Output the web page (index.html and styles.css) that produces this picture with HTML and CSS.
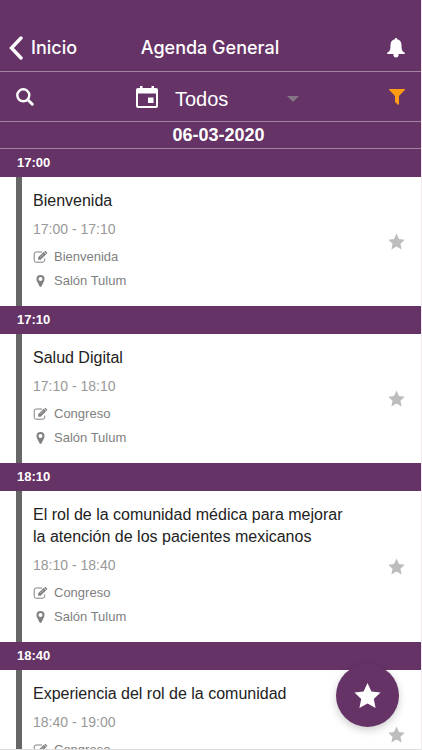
FILE: index.html
```html
<!DOCTYPE html>
<html lang="es">
<head>
    <meta charset="UTF-8">
    <meta name="viewport" content="width=device-width, initial-scale=1.0">
    <title>Agenda General</title>
    <link rel="stylesheet" href="styles.css">
</head>
<body>
    <!-- shared icons -->
    <svg class="sprite" aria-hidden="true">
        <symbol id="star" viewBox="0 0 24 24">
            <path d="M12 .8l3.500 7.600 8.100 1-6 5.600 1.600 8.200-7.200-4-7.200 4L6.400 15l-6-5.600 8.100-1z"/>
        </symbol>
        <symbol id="edit" viewBox="0 0 14 12">
            <path d="M8.500 1H2.700A2 2 0 0 0 .7 3v6.200a2 2 0 0 0 2 2h6.500a2 2 0 0 0 2-2V7.600" fill="none" stroke="currentColor" stroke-width="1"/>
            <path d="M4.700 6.200L10.300.8l2.400 2.400-5.600 5.500H4.700z"/>
            <path d="M10.900.5l.5-.4q.5-.3 1 .1l1.200 1.200q.4.500 0 1l-.5.500z"/>
            <path d="M6.700 6.300l3.500-3.500" fill="none" stroke="#fff" stroke-width=".4"/>
        </symbol>
        <symbol id="pin" viewBox="0 0 8 12">
            <path fill-rule="evenodd" d="M4 0a4 4 0 0 1 4 4c0 1-.2 1.700-.5 2.300L4.900 11.500q-.9.900-1.800 0L.5 6.300C.2 5.700 0 5 0 4a4 4 0 0 1 4-4zm0 2a2 2 0 1 0 0 4 2 2 0 0 0 0-4z"/>
        </symbol>
    </svg>

    <header class="navbar">
        <a class="back" href="#">
            <svg width="14" height="24" viewBox="0 0 14 24"><path d="M12 2L2.500 12 12 22" fill="none" stroke="currentColor" stroke-width="3.400" stroke-linecap="round"/></svg>
            Inicio
        </a>
        <h1 class="title">Agenda General</h1>
        <button class="icon-button" type="button" aria-label="Notificaciones">
            <svg width="18" height="20" viewBox="0 0 18 20"><path d="M9 0c.9 0 1.200.6 1.200 1.300 2.900.7 4.300 3 4.300 5.700 0 4.500.5 6.300 3 7.600.7.400.5 1.400-.4 1.400H.9c-.9 0-1.100-1-.4-1.400C3 13.300 3.500 11.500 3.500 7c0-2.700 1.400-5 4.300-5.700C7.800.6 8.100 0 9 0zM6.400 16h5.200v.8a2.600 2.600 0 0 1-5.200 0z"/></svg>
        </button>
    </header>

    <div class="toolbar">
        <button class="icon-button" type="button" aria-label="Buscar">
            <svg width="18" height="18" viewBox="0 0 18 18"><g fill="none" stroke="currentColor"><circle cx="7.300" cy="7.300" r="6" stroke-width="2.400"/><path d="M11.800 11.800l4.500 4.500" stroke-width="2.900" stroke-linecap="round"/></g></svg>
        </button>
        <div class="day-picker">
            <svg width="22" height="22" viewBox="0 0 22 22"><path fill-rule="evenodd" d="M4 0h2.500v2h9V0H18v2h2a2 2 0 0 1 2 2v16a2 2 0 0 1-2 2H2a2 2 0 0 1-2-2V4a2 2 0 0 1 2-2h2zM2 7.500V19.500q0 .5.500.5h17q.5 0 .5-.5V7.500zM12 11.500h5.500V17H12z"/></svg>
            <label class="select-wrap">
                <select class="select" aria-label="Categoría">
                    <option>Todos</option>
                    <option>Congreso</option>
                </select>
                <svg class="caret" width="12" height="6" viewBox="0 0 12 6"><path d="M0 0h12L6 6z"/></svg>
            </label>
        </div>
        <button class="icon-button filter" type="button" aria-label="Filtrar">
            <svg width="16" height="16" viewBox="0 0 16 16"><path d="M.6 0h14.800q.9.300.4 1.100L10 7v8.200q-.2 1-1 .5L6.300 13.200Q6 12.900 6 12.500V7L.2 1.100Q-.3.300.6 0z"/></svg>
        </button>
    </div>

    <h2 class="date">06-03-2020</h2>

    <main class="agenda">
        <h3 class="hour">17:00</h3>
        <article class="event">
            <div class="info">
                <h4 class="name">Bienvenida</h4>
                <p class="time">17:00 - 17:10</p>
                <p class="meta"><svg class="edit"><use href="#edit"/></svg>Bienvenida</p>
                <p class="meta"><svg class="pin"><use href="#pin"/></svg>Salón Tulum</p>
            </div>
            <button class="icon-button favorite" type="button" aria-label="Favorito"><svg width="17" height="17"><use href="#star"/></svg></button>
        </article>

        <h3 class="hour">17:10</h3>
        <article class="event">
            <div class="info">
                <h4 class="name">Salud Digital</h4>
                <p class="time">17:10 - 18:10</p>
                <p class="meta"><svg class="edit"><use href="#edit"/></svg>Congreso</p>
                <p class="meta"><svg class="pin"><use href="#pin"/></svg>Salón Tulum</p>
            </div>
            <button class="icon-button favorite" type="button" aria-label="Favorito"><svg width="17" height="17"><use href="#star"/></svg></button>
        </article>

        <h3 class="hour">18:10</h3>
        <article class="event">
            <div class="info">
                <h4 class="name">El rol de la comunidad médica para mejorar la atención de los pacientes mexicanos</h4>
                <p class="time">18:10 - 18:40</p>
                <p class="meta"><svg class="edit"><use href="#edit"/></svg>Congreso</p>
                <p class="meta"><svg class="pin"><use href="#pin"/></svg>Salón Tulum</p>
            </div>
            <button class="icon-button favorite" type="button" aria-label="Favorito"><svg width="17" height="17"><use href="#star"/></svg></button>
        </article>

        <h3 class="hour">18:40</h3>
        <article class="event">
            <div class="info">
                <h4 class="name">Experiencia del rol de la comunidad</h4>
                <p class="time">18:40 - 19:00</p>
                <p class="meta"><svg class="edit"><use href="#edit"/></svg>Congreso</p>
                <p class="meta"><svg class="pin"><use href="#pin"/></svg>Salón Tulum</p>
            </div>
            <button class="icon-button favorite" type="button" aria-label="Favorito"><svg width="17" height="17"><use href="#star"/></svg></button>
        </article>
    </main>

    <button class="fab" type="button" aria-label="Mis favoritos">
        <svg width="27" height="27"><use href="#star"/></svg>
    </button>
</body>
</html>
```

FILE: styles.css
```css
* {
    box-sizing: border-box;
}
body {
    display: flex;
    flex-direction: column;
    height: 100vh;
    margin: 0;
    overflow: hidden;
    border-right: 1px solid #eeeaee;
    border-bottom: 1px solid #dddddd;
    background: white;
    color: #222;
    font-family: "Liberation Sans", Arial, sans-serif;
}
h1, h2, h3, h4, p {
    margin: 0;
}
svg {
    display: block;
    flex: none;
    fill: currentColor;
}
.sprite {
    display: none;
}
.icon-button {
    display: flex;
    align-items: center;
    padding: 0;
    border: none;
    background: none;
    color: inherit;
    cursor: pointer;
}
.navbar, .toolbar {
    display: grid;
    grid-template-columns: 1fr auto 1fr;
    align-items: center;
    flex: none;
    padding: 0 16px;
    background: #663366;
    color: white;
    border-bottom: 1px solid #a283a2;
}
.navbar {
    padding-top: 24px;
    padding-left: 9px;
    height: 72px;
}
.navbar .icon-button, .toolbar .filter {
    justify-self: end;
}
.back {
    display: flex;
    align-items: center;
    gap: 8px;
    color: white;
    font-family: Inter, "Liberation Sans", sans-serif;
    font-size: 18px;
    font-weight: 500;
    text-decoration: none;
}
.title {
    padding-left: 6px;
    font-family: Inter, "Liberation Sans", sans-serif;
    font-size: 18px;
    font-weight: 500;
}
.toolbar {
    height: 50px;
}
.day-picker {
    display: flex;
    align-items: center;
    gap: 17px;
    padding-left: 14px;
}
.select-wrap {
    display: flex;
    align-items: center;
}
.select {
    width: 124px;
    padding: 4px 0 0;
    border: none;
    background: none;
    color: white;
    font-family: inherit;
    font-size: 20px;
    appearance: none;
}
.caret {
    margin-top: 4px;
    margin-left: -12px;
    color: #857585;
    pointer-events: none;
}
.filter {
    color: #ff9c13;
}
.date {
    flex: none;
    padding-left: 16px;
    background: #663366;
    border-bottom: 1px solid #a283a2;
    color: white;
    font-size: 18px;
    line-height: 26px;
    text-align: center;
}
.agenda {
    flex: 1;
    min-height: 0;
    overflow: hidden;
}
.hour {
    padding-left: 17px;
    background: #663366;
    color: white;
    font-size: 13px;
    font-weight: bold;
    line-height: 28px;
}
.event {
    display: flex;
    align-items: center;
    margin-left: 16px;
    padding-right: 16px;
    border-left: 6px solid #666666;
}
.info {
    flex: 1;
    padding: 13px 40px 13px 11px;
}
.name {
    font-size: 16px;
    font-weight: 400;
    line-height: 22px;
}
.time {
    margin: 7px 0 6px;
    color: #999;
    font-size: 14px;
    line-height: 20px;
}
.meta {
    display: flex;
    align-items: center;
    gap: 6px;
    color: #808080;
    font-size: 13px;
    line-height: 24px;
}
.edit {
    width: 15px;
    height: 12px;
}
.pin {
    width: 15px;
    height: 12px;
}
.favorite {
    color: #bdbdbd;
}
.fab {
    position: absolute;
    right: 23px;
    bottom: 23px;
    display: flex;
    align-items: center;
    justify-content: center;
    width: 63px;
    height: 63px;
    padding: 0;
    border: none;
    border-radius: 50%;
    background: #663366;
    color: white;
    box-shadow: 0 3px 8px rgba(0, 0, 0, 0.2);
    cursor: pointer;
}
```
